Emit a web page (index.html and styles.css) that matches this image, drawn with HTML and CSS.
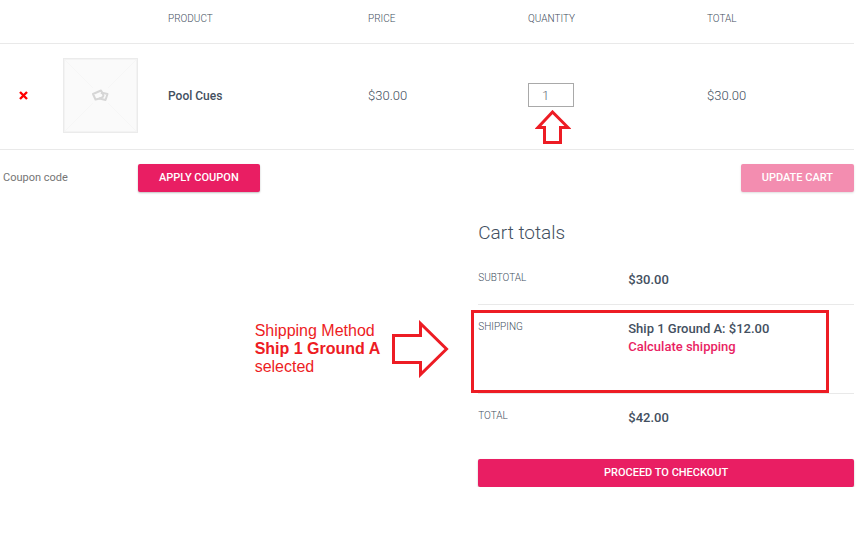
FILE: index.html
```
<!DOCTYPE html>
<html lang="en">
<head>
<meta charset="utf-8">
<title>Cart</title>
<link rel="stylesheet" href="styles.css">
</head>
<body>
<main class="page">
  <table class="cart">
    <colgroup>
      <col class="col-remove"><col class="col-thumb"><col class="col-product"><col class="col-price"><col class="col-quantity"><col>
    </colgroup>
    <thead>
      <tr><th></th><th></th><th>Product</th><th>Price</th><th>Quantity</th><th>Total</th></tr>
    </thead>
    <tbody>
      <tr>
        <td class="media">
          <button class="remove" type="button" aria-label="Remove item">
            <svg width="9" height="9" viewBox="0 0 9 9"><path d="M1 1l7 7M8 1L1 8" stroke="#f00" stroke-width="2.4" fill="none"/></svg>
          </button>
        </td>
        <td class="media">
          <svg class="thumb" width="75" height="75" viewBox="0 0 75 75">
            <rect x="0.5" y="0.5" width="74" height="74" fill="#fafafa" stroke="#ebebeb"/>
            <rect x="1.5" y="1.5" width="72" height="72" fill="none" stroke="#f3f3f3"/>
            <path d="M2 2l28 28M45 45l28 28M73 2L45 30M30 45L2 73" stroke="#f6f6f6" fill="none"/>
            <g fill="none" stroke="#d6d6d6" stroke-width="2" stroke-linejoin="round">
              <path d="M37 40.500l-4.500 1-2.500-5.500 8-3.500 2 3.500"/>
              <path d="M36.500 40.500l6 1.500 2-6-6.500-1.500"/>
              <path d="M38 34.500c3.500 2 3.500 5-2 6"/>
            </g>
          </svg>
        </td>
        <td class="name">Pool Cues</td>
        <td>$30.00</td>
        <td class="media">
          <div class="quantity">
            <input class="qty" type="text" inputmode="numeric" value="1" aria-label="Quantity">
            <svg class="arrow-up" width="36" height="36" viewBox="0 0 36 36"><path d="M17.500 2L3 17.500h6.500v15h16v-15H33z" fill="#fff" stroke="#ed1c24" stroke-width="3"/></svg>
          </div>
        </td>
        <td>$30.00</td>
      </tr>
    </tbody>
  </table>

  <form class="actions">
    <input class="coupon" type="text" placeholder="Coupon code" aria-label="Coupon code">
    <button class="button" type="button">Apply coupon</button>
    <button class="button update" type="button" disabled>Update cart</button>
  </form>

  <section class="totals">
    <h2>Cart totals</h2>
    <dl class="rows">
      <div class="row"><dt>Subtotal</dt><dd>$30.00</dd></div>
      <div class="row shipping">
        <dt>Shipping</dt>
        <dd>Ship 1 Ground A: $12.00<br><a href="#">Calculate shipping</a></dd>
        <div class="highlight"></div>
        <div class="callout">
          <p>Shipping Method<br><strong>Ship 1 Ground A</strong><br>selected</p>
          <svg width="58" height="58" viewBox="0 0 58 58"><path d="M2.500 15.500h27V3.500L55.500 29 29.500 54.500v-12h-27z" fill="#fff" stroke="#ed1c24" stroke-width="3"/></svg>
        </div>
      </div>
      <div class="row total"><dt>Total</dt><dd>$42.00</dd></div>
    </dl>
    <button class="button checkout" type="button">Proceed to checkout</button>
  </section>
</main>
</body>
</html>
```
FILE: styles.css
```
* { box-sizing: border-box; }
body {
  margin: 0;
  background: #fff;
  color: #434f60;
  font: 300 13px/18px Roboto, sans-serif;
}
.page { padding-right: 6px; }
.cart {
  width: 100%;
  border-collapse: collapse;
  table-layout: fixed;
}
.col-remove { width: 63px; }
.col-thumb { width: 105px; }
.col-product { width: 200px; }
.col-price { width: 160px; }
.col-quantity { width: 179px; }
th, td {
  padding: 0;
  border-bottom: 1px solid #e9e9e9;
  text-align: left;
}
th {
  height: 43px;
  padding-bottom: 5px;
  font-size: 10px;
  font-weight: 300;
  text-transform: uppercase;
}
td { height: 106px; }
.media { padding-bottom: 2px; }
.name {
  font-size: 12px;
  font-weight: 500;
}
.remove {
  display: block;
  margin-left: 19px;
  padding: 0;
  border: 0;
  background: none;
}
.remove svg, .thumb { display: block; }
.quantity { position: relative; }
.qty {
  display: block;
  width: 46px;
  height: 24px;
  padding: 0 13px;
  border: 1px solid #a9a9a9;
  color: #5f6873;
  font: inherit;
}
.arrow-up {
  position: absolute;
  top: 27px;
  left: 7px;
}
.actions {
  display: flex;
  align-items: center;
  padding: 14px 0;
}
.coupon {
  width: 138px;
  padding: 0 3px;
  border: 0;
  background: none;
  font: 400 11px/18px Roboto, sans-serif;
}
.coupon::placeholder { color: #757575; }
.button {
  height: 28px;
  padding: 0 21px;
  border: 0;
  border-radius: 2px;
  background: #e91e63;
  box-shadow: 0 1px 2px rgba(0, 0, 0, .25);
  color: #fff;
  font: 500 11px/18px Roboto, sans-serif;
  text-transform: uppercase;
}
.update {
  margin-left: auto;
  opacity: .5;
}
.totals {
  width: 44%;
  margin-left: auto;
  padding-top: 15px;
}
h2 {
  margin: 0 0 24px;
  font-size: 19px;
  font-weight: 300;
  line-height: 24px;
}
.rows { margin: 0; }
.row {
  position: relative;
  display: grid;
  grid-template-columns: 150px 1fr;
  padding: 2px 0 15px;
  border-bottom: 1px solid #e9e9e9;
}
dt {
  font-size: 10px;
  line-height: 14px;
  text-transform: uppercase;
}
dd {
  margin: 0;
  font-weight: 500;
}
.shipping {
  padding-top: 15px;
  padding-bottom: 37px;
}
.total {
  padding-top: 15px;
  padding-bottom: 32px;
  border: 0;
}
a {
  color: #e91e63;
  text-decoration: none;
}
.highlight {
  position: absolute;
  inset: 5px 25px 0 -7px;
  border: 3px solid #ed1c24;
}
.callout {
  position: absolute;
  top: 15px;
  right: 100%;
  display: flex;
  align-items: center;
  gap: 11px;
  margin-right: 29px;
  color: #ed1c24;
  font: 16px/18px "Liberation Sans", sans-serif;
  white-space: nowrap;
}
.callout p { margin: 0; }
.checkout { width: 100%; }
```
